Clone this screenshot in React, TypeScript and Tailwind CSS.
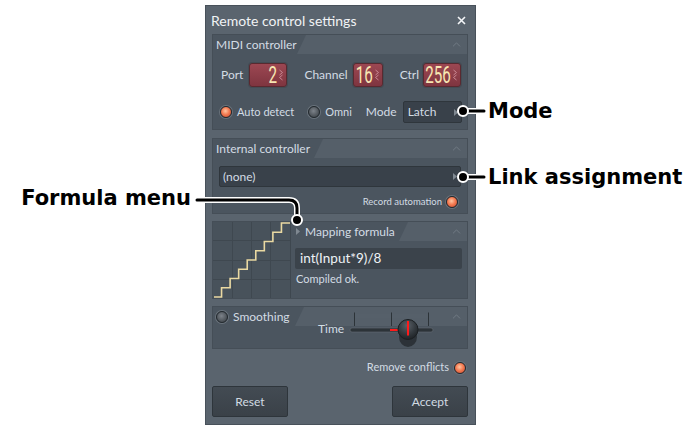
import React from 'react';
import { ChevronUp } from 'lucide-react';

// --- small pieces of the FL-style dialog ---

const Radio = ({ on = false }: { on?: boolean }) => (
  <span
    className={`inline-block shrink-0 w-[12px] h-[12px] rounded-full border border-[#23292e] shadow-[0_0_0_1px_#6a737c] ${
      on
        ? 'bg-[radial-gradient(circle_at_45%_40%,#ffc6a2_0%,#f47b52_45%,#c2452a_100%)]'
        : 'bg-[radial-gradient(circle_at_45%_40%,#7d838a_0%,#50565c_60%,#3a3f44_100%)]'
    }`}
  />
);

const SpinArrows = () => (
  <svg width="6" height="12" viewBox="0 0 6 12" className="shrink-0">
    <path d="M1.5 1 L4.5 3.5 L1.5 6" fill="none" stroke="#c98893" strokeWidth="1" />
    <path d="M4.5 6 L1.5 8.5 L4.5 11" fill="none" stroke="#c98893" strokeWidth="1" />
  </svg>
);

const NumBox = ({ value, w }: { value: string; w: string }) => (
  <div
    className={`${w} h-[24px] flex items-center justify-end gap-[1px] pr-[2px] rounded-[3px] border border-[#5a2930] bg-gradient-to-b from-[#9c4752] to-[#7f3540] shadow-[0_0_0_1px_#444c54]`}
  >
    <span className="inline-block origin-right scale-x-[0.66] font-['Roboto',sans-serif] text-[23px] leading-none text-[#f7e6b2]">
      {value}
    </span>
    <SpinArrows />
  </div>
);

const Tri = () => (
  <svg width="4" height="7" viewBox="0 0 4 7" className="shrink-0">
    <path d="M0 0 L4 3.5 L0 7 Z" fill="#7f8891" />
  </svg>
);

// tab width = where the slant meets the bottom edge
const Header = ({ children, tab }: { children: React.ReactNode; tab: string }) => (
  <div className="flex h-[19px] shrink-0">
    <div className={`flex items-center gap-[5px] whitespace-nowrap ${tab}`}>{children}</div>
    <div className="flex-1 flex items-center justify-end pr-[4px] bg-[#555f69] [clip-path:polygon(9px_0,100%_0,100%_100%,0_100%)]">
      <ChevronUp size={13} strokeWidth={1.6} className="text-[#747e88]" />
    </div>
  </div>
);

const StairGraph = () => {
  const n = 9;
  const w = 77;
  const h = 76;
  const sw = w / n;
  const sh = (h - 2) / (n - 1);
  let d = `M1 ${h - 1}`;
  for (let i = 0; i < n; i++) {
    const y = h - 1 - i * sh;
    d += ` L${(i + 1) * sw} ${y}`;
    if (i < n - 1) d += ` L${(i + 1) * sw} ${y - sh}`;
  }
  return (
    <svg width={w} height={h} viewBox={`0 0 ${w} ${h}`}>
      <rect width={w} height={h} fill="#48525b" />
      {[19.5, 38.5, 57.5].map((x) => (
        <line key={`v${x}`} x1={x} y1="0" x2={x} y2={h} stroke="#3f4850" strokeWidth="1" />
      ))}
      {[18.5, 38.5, 57.5].map((y) => (
        <line key={`h${y}`} x1="0" y1={y} x2={w} y2={y} stroke="#3f4850" strokeWidth="1" />
      ))}
      <path d={d} fill="none" stroke="#ead9a2" strokeWidth="1.6" />
    </svg>
  );
};

const TimeSlider = () => (
  <svg width="86" height="40" viewBox="0 0 86 40">
    <defs>
      <radialGradient id="knob" cx="45%" cy="30%" r="70%">
        <stop offset="0%" stopColor="#5a6168" />
        <stop offset="60%" stopColor="#33393e" />
        <stop offset="100%" stopColor="#1f2327" />
      </radialGradient>
    </defs>
    <rect x="5" y="3" width="74" height="4" fill="#56606a" />
    <line x1="5.5" y1="1.5" x2="5.5" y2="15" stroke="#2c3338" />
    <line x1="42.5" y1="1.5" x2="42.5" y2="15" stroke="#2c3338" />
    <line x1="79.5" y1="1.5" x2="79.5" y2="15" stroke="#2c3338" />
    <rect x="1" y="17" width="83" height="4" rx="2" fill="#2c3338" stroke="#646d76" strokeWidth="0.6" />
    <line x1="41" y1="19" x2="49" y2="19" stroke="#ff1a1a" strokeWidth="2" />
    <ellipse cx="59" cy="26" rx="9" ry="10" fill="#22272b" opacity="0.75" />
    <circle cx="59" cy="18.5" r="10" fill="url(#knob)" stroke="#1b1f22" strokeWidth="1" />
    <line x1="59" y1="10" x2="59" y2="24.5" stroke="#ff1a1a" strokeWidth="2" />
  </svg>
);

const Button = ({ label }: { label: string }) => (
  <div className="w-[76px] h-[31px] flex items-center justify-center rounded-[2px] border border-[#2e353b] bg-gradient-to-b from-[#434b53] to-[#3a4148] text-[12px] text-[#d2dbe3]">
    {label}
  </div>
);

export default function App() {
  return (
    <div className="relative w-[698px] h-[432px] overflow-hidden bg-white font-['Lato',sans-serif]">
      <div className="pt-[5px] pl-[205px]">
        {/* Dialog */}
        <div className="w-[271px] h-[420px] flex flex-col border border-[#48515a] bg-[#5a646e]">
          {/* Title bar */}
          <div className="h-[28px] shrink-0 flex items-center justify-between pl-[5px] pr-[9px]">
            <span className="text-[14px] text-[#f1f3f5]">Remote control settings</span>
            <svg width="9" height="9" viewBox="0 0 9 9">
              <path d="M1 1 L8 8 M8 1 L1 8" stroke="#f4f6f8" strokeWidth="1.6" />
            </svg>
          </div>

          <div className="flex flex-col pl-[6px] pr-[7px]">
            {/* MIDI controller */}
            <div className="h-[96px] flex flex-col border border-[#454e57] bg-[#4b555f]">
              <Header tab="w-[84px] pl-[3px]">
                <span className="text-[12px] text-[#d3dce4]">MIDI controller</span>
              </Header>
              <div className="mt-[9px] flex items-center pl-[8px] text-[12px] text-[#d3dce4]">
                <span>Port</span>
                <div className="ml-[6px]">
                  <NumBox value="2" w="w-[38px]" />
                </div>
                <span className="ml-[17px]">Channel</span>
                <div className="ml-[5px]">
                  <NumBox value="16" w="w-[30px]" />
                </div>
                <span className="ml-[17px]">Ctrl</span>
                <div className="ml-[4px]">
                  <NumBox value="256" w="w-[38px]" />
                </div>
              </div>
              <div className="mt-[14px] flex items-center pl-[7px] text-[11px] text-[#d3dce4]">
                <Radio on />
                <span className="ml-[5px]">Auto detect</span>
                <div className="ml-[14px] flex items-center">
                  <Radio />
                </div>
                <span className="ml-[5px]">Omni</span>
                <span className="ml-[14px] text-[12px]">Mode</span>
                <div className="ml-[6px] w-[59px] h-[22px] flex items-center justify-between pl-[4px] pr-[3px] rounded-[2px] border border-[#2f363c] bg-[#39414a] text-[12px]">
                  <span>Latch</span>
                  <Tri />
                </div>
              </div>
            </div>

            {/* Internal controller */}
            <div className="mt-[8px] h-[76px] flex flex-col border border-[#454e57] bg-[#4b555f]">
              <Header tab="w-[101px] pl-[3px]">
                <span className="text-[12px] text-[#d3dce4]">Internal controller</span>
              </Header>
              <div className="mt-[8px] ml-[6px] mr-[6px] h-[21px] flex items-center justify-between pl-[3px] pr-[3px] rounded-[2px] border border-[#2f363c] bg-[#39414a] text-[12px] text-[#d3dce4]">
                <span>(none)</span>
                <Tri />
              </div>
              <div className="mt-[8px] flex items-center justify-end gap-[4px] pr-[9px] text-[9.5px] text-[#d3dce4]">
                <span>Record automation</span>
                <Radio on />
              </div>
            </div>

            {/* Mapping formula */}
            <div className="mt-[7px] h-[78px] flex border border-[#454e57] bg-[#4b555f]">
              <div className="w-[78px] shrink-0 border-r border-[#3e474f]">
                <StairGraph />
              </div>
              <div className="flex-1 flex flex-col">
                <Header tab="w-[108px] pl-[5px]">
                  <Tri />
                  <span className="text-[12px] text-[#d3dce4]">Mapping formula</span>
                </Header>
                <div className="mt-[7px] ml-[4px] mr-[5px] h-[21px] flex items-center pl-[5px] rounded-[2px] bg-[#3b434b] text-[13.5px] text-[#eef2f5]">
                  int(Input*9)/8
                </div>
                <div className="mt-[4px] ml-[5px] text-[11px] leading-[12px] text-[#d3dce4]">Compiled ok.</div>
              </div>
            </div>

            {/* Smoothing */}
            <div className="relative mt-[7px] h-[43px] flex flex-col border border-[#454e57] bg-[#4b555f]">
              <Header tab="w-[82px] pl-[3px]">
                <Radio />
                <span className="text-[12px] text-[#d3dce4]">Smoothing</span>
              </Header>
              <span className="absolute left-[105px] top-[13px] text-[12px] text-[#d3dce4]">Time</span>
              <div className="absolute left-[136px] top-[4px]">
                <TimeSlider />
              </div>
            </div>

            {/* Remove conflicts */}
            <div className="mt-[9px] h-[19px] flex items-center justify-end gap-[5px] pr-[2px] text-[11px] text-[#d3dce4]">
              <span>Remove conflicts</span>
              <Radio on />
            </div>

            {/* Buttons */}
            <div className="mt-[9px] flex justify-between">
              <Button label="Reset" />
              <Button label="Accept" />
            </div>
          </div>
        </div>
      </div>

      {/* Callout lines */}
      <svg className="absolute inset-0 pointer-events-none" width="698" height="432" viewBox="0 0 698 432">
        <g fill="none" strokeLinecap="round" strokeLinejoin="round">
          <path d="M463 111 H484" stroke="#fff" strokeWidth="6" />
          <path d="M463 177 H484" stroke="#fff" strokeWidth="6" />
          <path d="M197 200 H289 Q297 200 297 208 V220" stroke="#fff" strokeWidth="6" />
          <path d="M463 111 H484" stroke="#000" strokeWidth="3" />
          <path d="M463 177 H484" stroke="#000" strokeWidth="3" />
          <path d="M197 200 H289 Q297 200 297 208 V220" stroke="#000" strokeWidth="3" />
        </g>
        <circle cx="463" cy="111" r="5" fill="#000" stroke="#fff" strokeWidth="2" />
        <circle cx="463" cy="177" r="5" fill="#000" stroke="#fff" strokeWidth="2" />
        <circle cx="297" cy="220" r="5" fill="#000" stroke="#fff" strokeWidth="2" />
      </svg>

      {/* Callout labels */}
      <span className="absolute left-[488px] top-[98px] text-[21px] leading-[26px] font-bold text-black font-['DejaVu_Sans',sans-serif]">
        Mode
      </span>
      <span className="absolute left-[488px] top-[164px] text-[21px] leading-[26px] font-bold text-black font-['DejaVu_Sans',sans-serif]">
        Link assignment
      </span>
      <span className="absolute right-[507px] top-[185px] text-[21px] leading-[26px] font-bold text-black font-['DejaVu_Sans',sans-serif]">
        Formula menu
      </span>
    </div>
  );
}
